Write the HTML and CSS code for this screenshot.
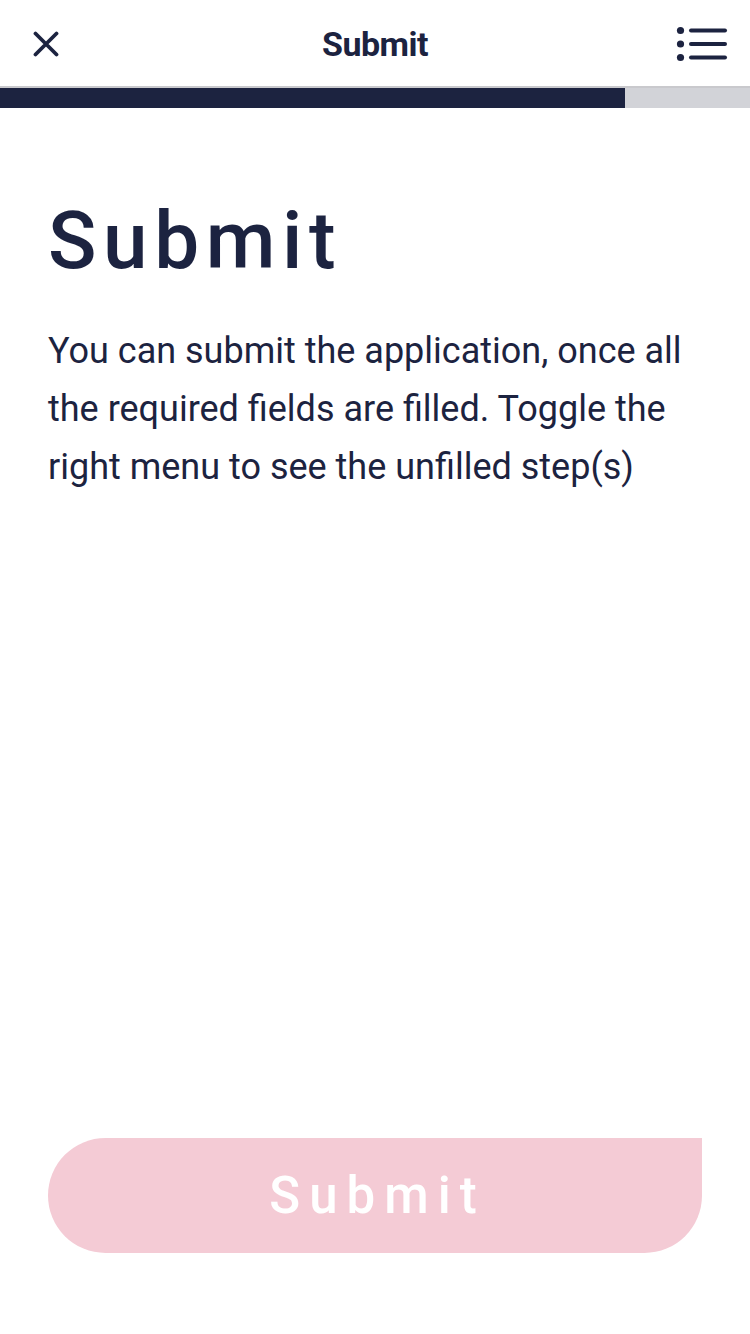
FILE: index.html
```html
<!DOCTYPE html>
<html lang="en">
<head>
<meta charset="utf-8">
<title>Submit</title>
<link rel="stylesheet" href="styles.css">
</head>
<body>
<div class="page">
  <header class="topbar">
    <button class="icon-btn close" aria-label="Close">
      <svg width="26" height="26" viewBox="0 0 26 26"><path d="M2.5 2.5 L23.5 23.5 M23.5 2.5 L2.5 23.5" stroke="#1c2340" stroke-width="3.8" stroke-linecap="round" fill="none"/></svg>
    </button>
    <div class="topbar-title">Submit</div>
    <button class="icon-btn menu" aria-label="Menu">
      <svg width="52" height="36" viewBox="0 0 52 36"><g fill="#1c2340"><circle cx="4.5" cy="4.5" r="3.6"/><circle cx="4.5" cy="18" r="3.6"/><circle cx="4.5" cy="31.5" r="3.6"/></g><g stroke="#1c2340" stroke-width="4" stroke-linecap="round"><path d="M15 4.5 H49"/><path d="M15 18 H49"/><path d="M15 31.5 H49"/></g></svg>
    </button>
  </header>
  <div class="progress"><div class="progress-fill" style="width:625px"></div></div>
  <main class="content">
    <h1 class="heading">Submit</h1>
    <p class="desc">You can submit the application, once all the required fields are filled. Toggle the right menu to see the unfilled step(s)</p>
  </main>
  <div class="actions">
    <button class="submit-btn">Submit</button>
  </div>
</div>
</body>
</html>
```
FILE: styles.css
```css
* { box-sizing: border-box; }
html, body { margin: 0; padding: 0; background: #fff; }
body { font-family: Roboto, "Noto Sans", sans-serif; color: #1c2340; }
.page { width: 750px; min-height: 1334px; display: flex; flex-direction: column; }
.topbar {
  height: 88px;
  display: grid;
  grid-template-columns: 1fr auto 1fr;
  align-items: center;
  padding: 0 22px;
  border-bottom: 2px solid #c9c9cd;
}
.icon-btn { background: none; border: 0; padding: 0; display: flex; cursor: pointer; }
.close { justify-self: start; margin: 1px 0 0 11px; }
.topbar-title { font-size: 34px; font-weight: 700; letter-spacing: -0.5px; margin-top: 1px; }
.menu { justify-self: end; margin-top: 1px; }
.progress { height: 20px; background: #d2d3d8; display: flex; }
.progress-fill { height: 100%; background: #1c2340; }
.content { flex: 1; padding: 85px 48px 0; }
.heading {
  margin: 0;
  font-size: 80px;
  line-height: 96px;
  font-weight: 500;
  letter-spacing: 6.6px;
}
.desc {
  margin: 33px 0 0;
  font-size: 36px;
  line-height: 58px;
  font-weight: 400;
  letter-spacing: 0;
  color: #1c2340;
}
.actions { padding: 0 48px 81px; }
.submit-btn {
  width: 654px;
  height: 115px;
  border: 0;
  background: #f4cbd5;
  color: #fff;
  font-family: Roboto, sans-serif;
  font-size: 51px;
  font-weight: 500;
  letter-spacing: 9px;
  border-radius: 58px 0 58px 58px;
  display: flex;
  align-items: center;
  justify-content: center;
  padding: 0 0 0 5px;
}
```
